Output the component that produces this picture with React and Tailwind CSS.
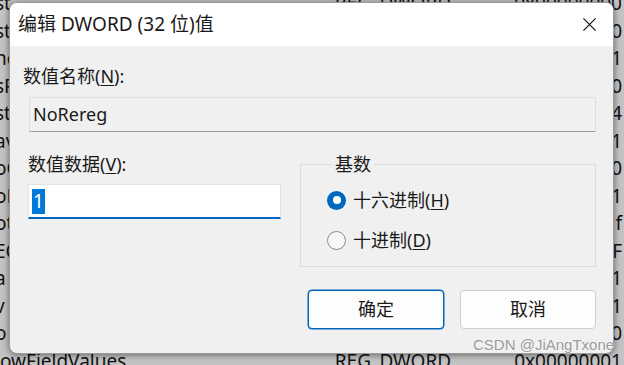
import React from 'react';

const rows = [
  { l: 'st', m: 'REG_DWORD', r: '0x00000000' },
  { l: 'st', m: '', r: '0' },
  { l: 'nc', m: '', r: '1' },
  { l: 'sP', m: '', r: '0' },
  { l: 'st', m: '', r: '4' },
  { l: 'av', m: '', r: '1' },
  { l: 'oC', m: '', r: '0' },
  { l: 'oF', m: '', r: '1' },
  { l: 'ot', m: '', r: 'f' },
  { l: 'EC', m: '', r: 'F' },
  { l: 'a', m: '', r: '1' },
  { l: 'v', m: '', r: '1' },
  { l: 'o', m: '', r: '0' },
  { l: 'owFieldValues', m: 'REG_DWORD', r: '0x00000001' },
];

function Radio({ checked, label, hotkey }) {
  return (
    <div className="flex items-center h-6 gap-[7px]">
      {checked ? (
        <span className="w-[19px] h-[19px] rounded-full bg-[#0067c0] flex items-center justify-center">
          <span className="w-[8px] h-[8px] rounded-full bg-white" />
        </span>
      ) : (
        <span className="w-[19px] h-[19px] rounded-full border border-[#8a8a8a] bg-[#f7f7f7]" />
      )}
      <span>
        {label}(<span className="underline underline-offset-2">{hotkey}</span>)
      </span>
    </div>
  );
}

export default function App() {
  return (
    <div
      className="relative w-[624px] h-[365px] overflow-hidden bg-[#c3c3c3] text-[#111]"
      style={{ fontFamily: '"Noto Sans", "Noto Sans CJK SC", sans-serif' }}
    >
      {/* registry list behind the dialog */}
      <div className="-mt-[10px] text-[19px] leading-[27px]">
        {rows.map((row, i) => (
          <div key={i} className="flex h-[27.5px] whitespace-nowrap">
            <span className="w-[336px]">
              {row.l.length > 3 ? row.l : <span className="-ml-[5px]">{row.l}</span>}
            </span>
            <span className="w-[180px]">{row.m}</span>
            <span className="flex-1 text-right pr-[2px]">{row.r}</span>
          </div>
        ))}
      </div>

      {/* dialog */}
      <div className="absolute left-[9px] top-[2px] w-[605px] h-[352px] rounded-lg overflow-hidden bg-[#f0f0f0] shadow-[0_1px_6px_rgba(0,0,0,0.5)] border border-[#9c9c9c] text-[18px] text-[#1a1a1a]">
        <div className="h-[43px] bg-white flex items-center justify-between pl-[8px] pr-[16px]">
          <span className="text-[19px]">编辑 DWORD (32 位)值</span>
          <svg width="15" height="15" viewBox="0 0 16 16">
            <path d="M1.5 1.5 L14.5 14.5 M14.5 1.5 L1.5 14.5" stroke="#1a1a1a" strokeWidth="1.3" fill="none" />
          </svg>
        </div>

        <div className="pl-[18px] pr-[17px]">
          <div className="mt-[18px] h-6 leading-6 -ml-[5px]">
            数值名称(<span className="underline underline-offset-2">N</span>):
          </div>
          <div className="mt-[9px] ml-[1px] h-[35px] border border-[#dedede] border-b-[#9e9e9e] bg-[#f0f0f0] flex items-center pl-[3px] text-[18px]">
            NoRereg
          </div>

          <div className="flex mt-[20px]">
            <div className="w-[253px]">
              <div className="h-6 leading-6">
                数值数据(<span className="underline underline-offset-2">V</span>):
              </div>
              <div className="mt-[8px] h-[35px] bg-white border border-[#e3e3e3] border-b-2 border-b-[#0067c0] flex items-center pl-[3px]">
                <span className="bg-[#0078d7] text-white px-[1px] leading-[25px] text-[19px]">1</span>
              </div>
            </div>

            <fieldset className="ml-[19px] w-[296px] h-[115px] border border-[#dcdcdc] pl-[26px]">
              <legend className="ml-[5px] px-[3px] leading-6 h-6">基数</legend>
              <div className="mt-[12px] flex flex-col gap-[16px]">
                <Radio checked label="十六进制" hotkey="H" />
                <Radio label="十进制" hotkey="D" />
              </div>
            </fieldset>
          </div>

          <div className="flex justify-end gap-[16px] mt-[23px]">
            <button className="w-[136px] h-[39px] rounded-[4px] bg-[#fdfdfd] border border-[#0067c0] ring-[0.5px] ring-[#0067c0]">
              确定
            </button>
            <button className="w-[136px] h-[39px] rounded-[4px] bg-[#fdfdfd] border border-[#d0d0d0]">
              取消
            </button>
          </div>
        </div>
      </div>

      {/* watermark */}
      <div
        className="absolute left-[473px] top-[335px] text-[15px] text-[#9a9a9a] leading-5"
        style={{ fontFamily: '"Liberation Sans", sans-serif', textShadow: '0 0 2px #fff' }}
      >
        CSDN @JiAngTxone
      </div>
    </div>
  );
}
